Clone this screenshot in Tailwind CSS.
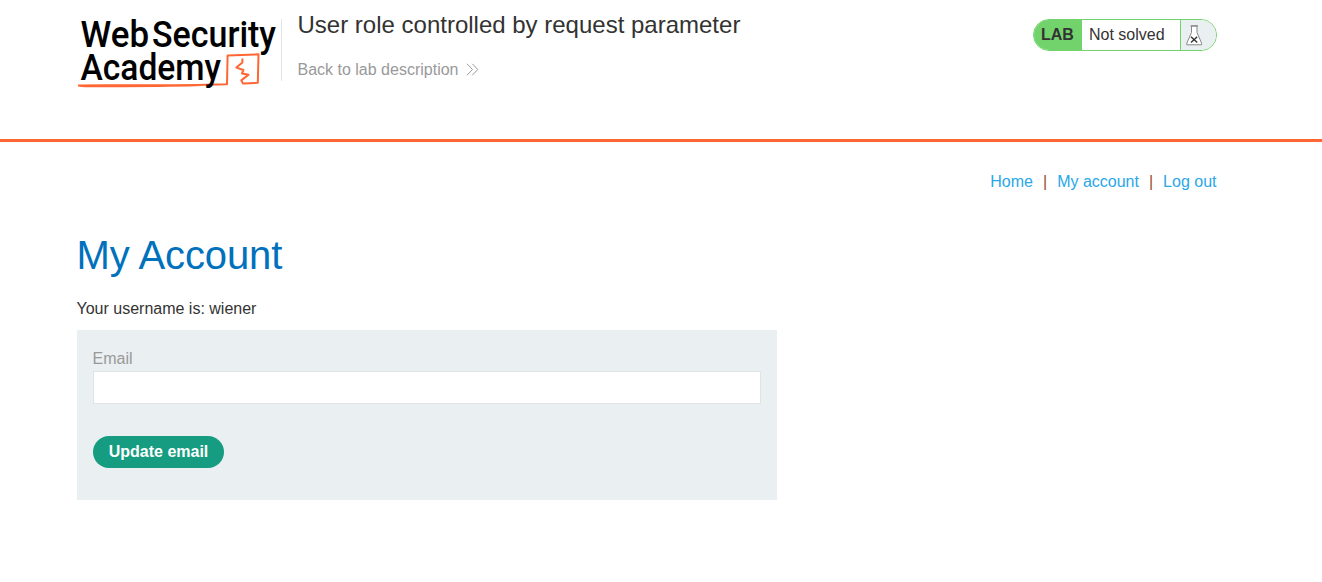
<!DOCTYPE html>
<html lang="en">
<head>
<meta charset="utf-8">
<title>User role controlled by request parameter</title>
<script src="https://cdn.jsdelivr.net/npm/@tailwindcss/browser@4"></script>
</head>
<body class="bg-white text-base leading-6 text-[#333332] font-['Liberation_Sans',Arial,sans-serif]">
<header class="h-[142px] border-b-3 border-[#ff6633]">
  <div class="ml-[77px] w-[1140px] flex items-start">
    <svg class="w-[204px] h-[92px] shrink-0 overflow-visible" viewBox="0 0 204 92" fill="none" aria-label="Web Security Academy">
      <path d="M1 85.4C40 85 90 86 150 84.3L150.6 55.4L181.5 54.3L180.8 82.8L166 83.6L164.3 80.4L171.5 74.8L165 73.4L166.4 70L159.4 67.6L165.4 62.5L165.4 58.4M1 85.4C5 86.6 9 86.4 14 86.3C50 86 90 86.3 125 85" stroke="#ff6633" stroke-width="2" stroke-linejoin="round"/>
      <g fill="#000" font-family="Roboto, sans-serif" font-size="37.5" font-weight="500">
        <text x="3.5" y="47.3" textLength="68.5" lengthAdjust="spacingAndGlyphs">Web</text>
        <text x="75" y="47.3" textLength="124" lengthAdjust="spacingAndGlyphs">Security</text>
        <text x="3.5" y="79.8" textLength="140.5" lengthAdjust="spacingAndGlyphs">Academy</text>
      </g>
    </svg>
    <div class="mt-[19px] h-[62px] border-l border-[#e3e6e8] pl-[15.5px]">
      <h2 class="-mt-[9px] text-2xl leading-[30px] whitespace-nowrap">User role controlled by request parameter</h2>
      <a class="mt-[18px] flex items-center text-[#999999] whitespace-nowrap">Back to lab description
        <svg class="ml-[7.5px] -mt-0.5 w-[13px] h-[13px]" viewBox="0 0 13 13" fill="none" stroke="#999999" stroke-width="1"><path d="M1 .8L6.5 6.5L1 12.2M6.3 .8L11.8 6.5L6.3 12.2"/></svg>
      </a>
    </div>
    <div class="ml-auto mt-[19px] flex h-8 w-[184px] overflow-hidden rounded-full border border-[#72d36c] leading-[30px]">
      <span class="w-12 bg-[#72d36c] pl-[7px] font-bold">LAB</span>
      <span class="w-[98px] pl-[7px] whitespace-nowrap">Not solved</span>
      <span class="flex-1 border-l border-[#72d36c] bg-[#eaeff2] pl-[5px] pt-[5px]">
        <svg class="w-[17px] h-[21px]" viewBox="0 0 17 21" fill="none"><path d="M5.5 1V7.5L.8 18.2V19.8H15.6V18.2L11 7.5V1Z" fill="#fff" stroke="#888" stroke-width="1"/><path d="M4.5 .8H12" stroke="#888" stroke-width="1.2"/><path d="M5 11.7L11.2 17.5M11.2 11.7L5 17.5" stroke="#333332" stroke-width="1.4"/></svg>
      </span>
    </div>
  </div>
</header>
<main class="ml-[76.5px] w-[1140px] pt-7">
  <nav class="flex justify-end gap-[10px] text-[#29a7e8]">
    <a>Home</a><span class="text-[#93501f]">|</span><a>My account</a><span class="text-[#93501f]">|</span><a>Log out</a>
  </nav>
  <h1 class="mt-[37px] text-[40px] leading-[48px] tracking-[-0.1px] text-[#0071bc]">My Account</h1>
  <p class="mt-[18px]">Your username is: wiener</p>
  <form class="mt-[9px] ml-[0.5px] h-[170px] w-[700px] bg-[#eaeff2] px-4 pt-[17px]">
    <label class="-ml-[0.5px] block text-[#999999]">Email</label>
    <input type="text" aria-label="Email" class="block h-[33px] w-full border border-[#e0e4e6] bg-white">
    <button type="button" class="mt-8 block h-8 w-[131px] rounded-full bg-[#169c80] font-bold text-white">Update email</button>
  </form>
</main>
</body>
</html>
